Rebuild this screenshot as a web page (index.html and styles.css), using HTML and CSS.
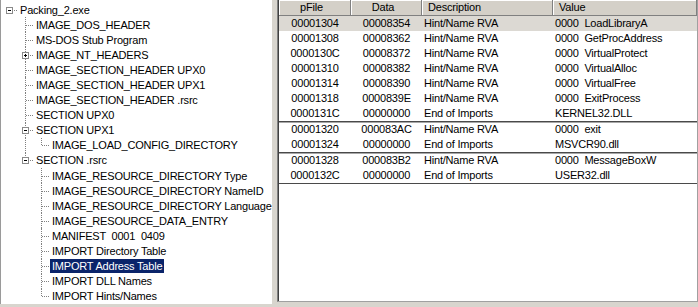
FILE: index.html
```html
<!DOCTYPE html>
<html lang="en">

<head>
    <meta charset="UTF-8">
    <title>Packing_2.exe</title>
    <link rel="stylesheet" href="styles.css">
</head>

<body>
    <div class="tree">
        <div class="node"><span class="c h"><i class="box minus"></i></span><span class="label">Packing_2.exe</span></div>
        <div class="node"><span class="c"></span><span class="c t"></span><span class="label">IMAGE_DOS_HEADER</span></div>
        <div class="node"><span class="c"></span><span class="c t"></span><span class="label">MS-DOS Stub Program</span></div>
        <div class="node"><span class="c"></span><span class="c t"><i class="box plus"></i></span><span class="label">IMAGE_NT_HEADERS</span></div>
        <div class="node"><span class="c"></span><span class="c t"></span><span class="label">IMAGE_SECTION_HEADER UPX0</span></div>
        <div class="node"><span class="c"></span><span class="c t"></span><span class="label">IMAGE_SECTION_HEADER UPX1</span></div>
        <div class="node"><span class="c"></span><span class="c t"></span><span class="label">IMAGE_SECTION_HEADER .rsrc</span></div>
        <div class="node"><span class="c"></span><span class="c t"></span><span class="label">SECTION UPX0</span></div>
        <div class="node"><span class="c"></span><span class="c t"><i class="box minus"></i></span><span class="label">SECTION UPX1</span></div>
        <div class="node"><span class="c"></span><span class="c v"></span><span class="c l"></span><span class="label">IMAGE_LOAD_CONFIG_DIRECTORY</span></div>
        <div class="node"><span class="c"></span><span class="c l"><i class="box minus"></i></span><span class="label">SECTION .rsrc</span></div>
        <div class="node"><span class="c"></span><span class="c"></span><span class="c t"></span><span class="label">IMAGE_RESOURCE_DIRECTORY Type</span></div>
        <div class="node"><span class="c"></span><span class="c"></span><span class="c t"></span><span class="label">IMAGE_RESOURCE_DIRECTORY NameID</span></div>
        <div class="node"><span class="c"></span><span class="c"></span><span class="c t"></span><span class="label">IMAGE_RESOURCE_DIRECTORY Language</span></div>
        <div class="node"><span class="c"></span><span class="c"></span><span class="c t"></span><span class="label">IMAGE_RESOURCE_DATA_ENTRY</span></div>
        <div class="node"><span class="c"></span><span class="c"></span><span class="c t"></span><span class="label">MANIFEST  0001  0409</span></div>
        <div class="node"><span class="c"></span><span class="c"></span><span class="c t"></span><span class="label">IMPORT Directory Table</span></div>
        <div class="node"><span class="c"></span><span class="c"></span><span class="c t"></span><span class="label sel">IMPORT Address Table</span></div>
        <div class="node"><span class="c"></span><span class="c"></span><span class="c t"></span><span class="label">IMPORT DLL Names</span></div>
        <div class="node"><span class="c"></span><span class="c"></span><span class="c l"></span><span class="label">IMPORT Hints/Names</span></div>
    </div>

    <div class="list">
        <div class="list-inner">
            <div class="hdr">
                <div class="mid">pFile</div>
                <div class="mid">Data</div>
                <div>Description</div>
                <div>Value</div>
            </div>
            <div class="row cur"><div>00001304</div><div>00008354</div><div>Hint/Name RVA</div><div>0000  LoadLibraryA</div></div>
            <div class="row"><div>00001308</div><div>00008362</div><div>Hint/Name RVA</div><div>0000  GetProcAddress</div></div>
            <div class="row"><div>0000130C</div><div>00008372</div><div>Hint/Name RVA</div><div>0000  VirtualProtect</div></div>
            <div class="row"><div>00001310</div><div>00008382</div><div>Hint/Name RVA</div><div>0000  VirtualAlloc</div></div>
            <div class="row"><div>00001314</div><div>00008390</div><div>Hint/Name RVA</div><div>0000  VirtualFree</div></div>
            <div class="row"><div>00001318</div><div>0000839E</div><div>Hint/Name RVA</div><div>0000  ExitProcess</div></div>
            <div class="row end"><div>0000131C</div><div>00000000</div><div>End of Imports</div><div>KERNEL32.DLL</div></div>
            <div class="row"><div>00001320</div><div>000083AC</div><div>Hint/Name RVA</div><div>0000  exit</div></div>
            <div class="row end"><div>00001324</div><div>00000000</div><div>End of Imports</div><div>MSVCR90.dll</div></div>
            <div class="row"><div>00001328</div><div>000083B2</div><div>Hint/Name RVA</div><div>0000  MessageBoxW</div></div>
            <div class="row end"><div>0000132C</div><div>00000000</div><div>End of Imports</div><div>USER32.dll</div></div>
        </div>
    </div>
</body>

</html>
```

FILE: styles.css
```css
* {
    box-sizing: border-box;
}

html,
body {
    margin: 0;
}

body {
    width: 698px;
    height: 307px;
    overflow: hidden;
    display: flex;
    align-items: flex-start;
    background-color: #d8d5ce;
    font-family: "Liberation Sans", Arial, sans-serif;
    font-size: 11px;
    letter-spacing: -0.2px;
    color: #000;
}

/* left pane: the file tree */
.tree {
    width: 272px;
    height: 304px;
    margin-right: 5px;
    padding-top: 2px;
    background-color: #fff;
    border-left: 1px solid #9a9a9a;
}

.node {
    display: flex;
    align-items: center;
    height: 15.1px;
    white-space: nowrap;
}

.c {
    position: relative;
    flex: none;
    width: 16px;
    height: 100%;
}

.c.v::before,
.c.t::before,
.c.l::before {
    content: "";
    position: absolute;
    left: 8px;
    top: 0;
    bottom: 0;
    border-left: 1px dotted #808080;
}

.c.l::before {
    bottom: 50%;
}

.c.t::after,
.c.l::after,
.c.h::after {
    content: "";
    position: absolute;
    left: 9px;
    right: 0;
    top: 50%;
    border-top: 1px dotted #808080;
}

.box {
    position: absolute;
    z-index: 1;
    left: 5px;
    top: 50%;
    margin-top: -3px;
    width: 7px;
    height: 7px;
    border: 1px solid #8a8a8a;
    background-color: #fff;
}

.box::before,
.box.plus::after {
    content: "";
    position: absolute;
    background-color: #000;
}

.box::before {
    left: 1px;
    top: 2px;
    width: 3px;
    height: 1px;
}

.box.plus::after {
    left: 2px;
    top: 1px;
    width: 1px;
    height: 3px;
}

.label {
    margin-left: 1px;
    padding: 0 2px;
    line-height: 14px;
    white-space: pre;
}

.label.sel {
    background-color: #0a246a;
    color: #fff;
}

/* right pane: the import list */
.list {
    flex: 1;
    height: 302px;
    background-color: #fff;
    border-left: 1px solid #808080;
    border-right: 1px solid #a0a0a0;
    border-bottom: 1px solid #a0a0a0;
}

.list-inner {
    height: 100%;
    border-left: 1px solid #404040;
}

.hdr,
.row {
    display: grid;
    grid-template-columns: 72px 71px 131px 1fr;
}

.hdr {
    height: 16px;
    background-color: #d4d0c8;
    border-bottom: 1px solid #808080;
}

.hdr div {
    padding-left: 6px;
    line-height: 15px;
    border-right: 1px solid #808080;
    box-shadow: inset 1px 1px #fff;
}

.hdr div.mid {
    padding: 0 6px 0 0;
    text-align: center;
}

.row {
    height: 15px;
    line-height: 15px;
}

.row div {
    padding-left: 2px;
    white-space: pre;
}

.row div:nth-child(1),
.row div:nth-child(2) {
    padding-left: 0;
    text-align: center;
}

.row.cur {
    background-color: #dcd9d3;
}

.row.end {
    height: 16px;
    border-bottom: 1px solid #4a4a4a;
}

.row.end + .row {
    box-shadow: inset 0 1px #a8a8a8;
}
```
